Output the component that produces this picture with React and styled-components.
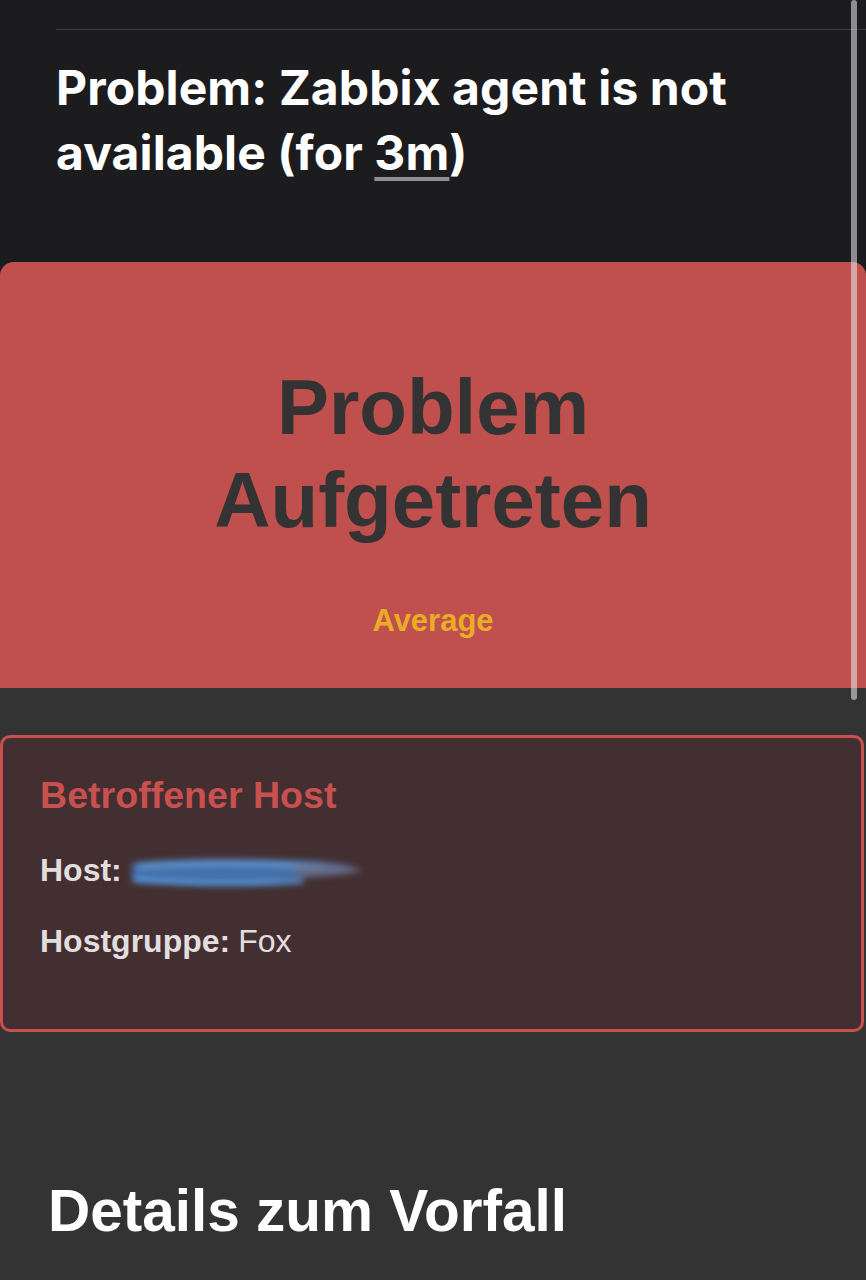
import React from 'react';
import styled, { createGlobalStyle } from 'styled-components';

const GlobalStyle = createGlobalStyle`
  html, body {
    margin: 0;
    padding: 0;
    background: #1c1c1e;
  }
  * {
    box-sizing: border-box;
  }
`;

const Page = styled.div`
  position: relative;
  min-height: 1280px;
  background: #1c1c1e;
  overflow: hidden;
`;

const Scrollbar = styled.div`
  position: absolute;
  top: 0;
  right: 9px;
  width: 6px;
  height: 700px;
  border-radius: 3px;
  background: rgba(235, 235, 240, 0.55);
  z-index: 2;
`;

// Mail header with the subject line
const MailHeader = styled.header`
  height: 262px;
  padding: 29px 0 0 56px;
`;

const Divider = styled.hr`
  margin: 0;
  border: none;
  border-top: 1px solid #3a3a3c;
`;

const Subject = styled.h1`
  margin: 25px 0 0;
  font-family: Inter, 'Noto Sans', sans-serif;
  font-weight: 700;
  font-size: 48px;
  line-height: 65px;
  letter-spacing: 0.1px;
  color: #ffffff;
  max-width: 740px;
`;

const Duration = styled.span`
  text-decoration: underline;
  text-decoration-color: #8e8e93;
  text-decoration-thickness: 4px;
  text-underline-offset: 7px;
`;

// Email body
const MailBody = styled.main`
  background: #333333;
  border-radius: 14px 14px 0 0;
  overflow: hidden;
  min-height: 1018px;
  font-family: 'Liberation Sans', Arial, sans-serif;
`;

const Banner = styled.section`
  background: #c0504d;
  height: 426px;
  padding: 99px 60px 0;
  text-align: center;
`;

const BannerTitle = styled.h2`
  margin: 0;
  font-size: 78px;
  line-height: 93px;
  font-weight: 700;
  color: #333333;
`;

const Severity = styled.div`
  margin-top: 56px;
  font-size: 31px;
  line-height: 36px;
  font-weight: 700;
  color: ${({ color }) => color || '#e8ac26'};
`;

const Card = styled.section`
  margin: 47px 2px 0 0;
  height: 297px;
  border: 3px solid #c8504e;
  border-radius: 10px;
  background: #432f31;
  padding: 36px 37px 0;
`;

const CardTitle = styled.h3`
  margin: 0 0 35px;
  font-size: 37.6px;
  line-height: 43px;
  font-weight: 700;
  color: #c8504e;
`;

const Field = styled.p`
  margin: 0 0 34px;
  font-size: 32px;
  line-height: 37px;
  color: #e2dede;
  white-space: nowrap;
`;

const FieldLabel = styled.strong`
  font-weight: 700;
  margin-right: 8px;
`;

const Redacted = styled.svg`
  display: inline-block;
  vertical-align: middle;
  overflow: visible;
  margin-left: -2px;
`;

const SectionTitle = styled.h2`
  margin: 145px 0 0;
  padding-left: 48px;
  font-size: 58.5px;
  line-height: 67px;
  font-weight: 700;
  color: #ffffff;
`;

function BlurredHost() {
  return (
    <Redacted width="236" height="30" viewBox="0 7 236 30">
      <defs>
        <filter id="smear" x="-20%" y="-80%" width="140%" height="260%">
          <feGaussianBlur stdDeviation="3" />
        </filter>
      </defs>
      <g filter="url(#smear)">
        <path d="M4 12 C60 6 130 8 180 10 C205 11 222 14 232 19 C212 26 170 25 150 29 C110 34 40 35 4 31 Z" fill="#4679b8" opacity="0.85" />
        <path d="M6 29 C60 33 120 34 175 30" stroke="#5aa4f2" strokeWidth="4" fill="none" />
        <path d="M10 15 C70 11 140 12 195 15" stroke="#6aa8e6" strokeWidth="4" fill="none" opacity="0.85" />
        <path d="M8 22 C70 20 130 22 180 21" stroke="#3f73b5" strokeWidth="4" fill="none" opacity="0.8" />
        <path d="M165 14 C195 12 218 15 236 19 C218 25 190 25 168 25 Z" fill="#7a6a78" opacity="0.6" />
      </g>
    </Redacted>
  );
}

export default function App() {
  return (
    <>
      <GlobalStyle />
      <Page>
        <Scrollbar />
        <MailHeader>
          <Divider />
          <Subject>
            Problem: Zabbix agent is not available (for <Duration>3m</Duration>)
          </Subject>
        </MailHeader>
        <MailBody>
          <Banner>
            <BannerTitle>Problem Aufgetreten</BannerTitle>
            <Severity>Average</Severity>
          </Banner>
          <Card>
            <CardTitle>Betroffener Host</CardTitle>
            <Field>
              <FieldLabel>Host:</FieldLabel>
              <BlurredHost />
            </Field>
            <Field>
              <FieldLabel>Hostgruppe:</FieldLabel>
              Fox
            </Field>
          </Card>
          <SectionTitle>Details zum Vorfall</SectionTitle>
        </MailBody>
      </Page>
    </>
  );
}
